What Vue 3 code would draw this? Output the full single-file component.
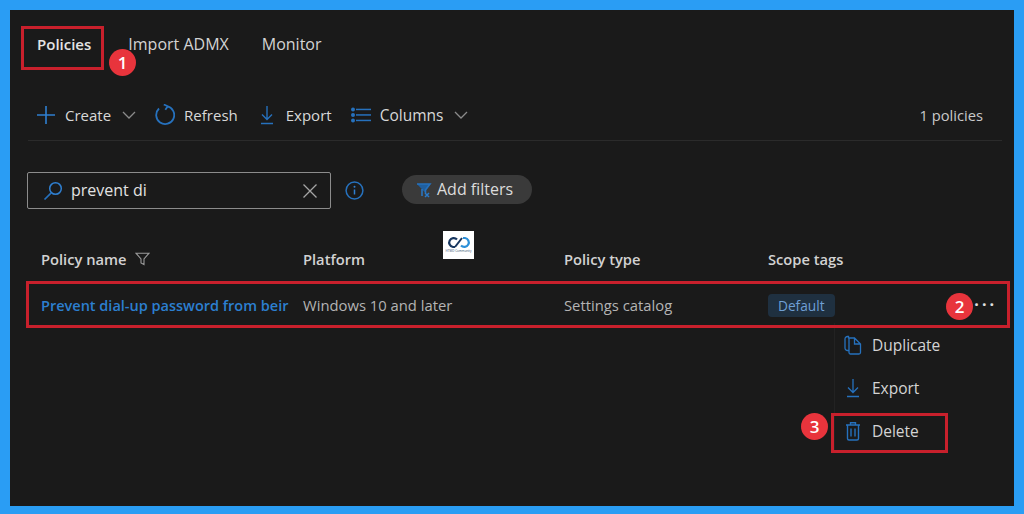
<script setup>
const tabs = [
  { label: 'Policies', active: true },
  { label: 'Import ADMX', active: false },
  { label: 'Monitor', active: false },
]
const columns = ['Platform', 'Policy type', 'Scope tags']
</script>

<template>
  <div class="frame">
    <main class="panel">
      <nav class="tabs">
        <span v-for="t in tabs" :key="t.label" class="tab" :class="{ active: t.active }">{{ t.label }}</span>
      </nav>

      <div class="toolbar">
        <div class="tool create">
          <svg class="ico" width="20" height="20" viewBox="0 0 20 20"><path d="M10 1v18M1 10h18" stroke="#2f7fd0" stroke-width="1.6" fill="none"/></svg>
          <span class="tool-label">Create</span>
          <svg class="chev" width="14" height="8" viewBox="0 0 14 8"><path d="M1 1l6 6 6-6" stroke="#8a8a8a" stroke-width="1.3" fill="none"/></svg>
        </div>
        <div class="tool refresh">
          <svg class="ico" width="20" height="22" viewBox="0 0 20 22"><path d="M4 4.500A9 9 0 1 0 12 2.200M8.800 0.500L12.800 2.300L10.300 5.800" stroke="#2671bd" stroke-width="1.8" fill="none"/></svg>
          <span class="tool-label">Refresh</span>
        </div>
        <div class="tool export">
          <svg class="ico" width="14" height="20" viewBox="0 0 14 20"><path d="M7 1v13M2 9.500l5 5 5-5M1 18.500h12" stroke="#2671bd" stroke-width="1.400" fill="none"/></svg>
          <span class="tool-label">Export</span>
        </div>
        <div class="tool cols">
          <svg class="ico" width="20" height="16" viewBox="0 0 20 16"><g fill="#2671bd"><circle cx="2" cy="2.500" r="2"/><circle cx="2" cy="8" r="2"/><circle cx="2" cy="13.500" r="2"/><rect x="5" y="1.700" width="15" height="1.500"/><rect x="5" y="7.200" width="15" height="1.500"/><rect x="5" y="12.700" width="15" height="1.500"/></g></svg>
          <span class="tool-label">Columns</span>
          <svg class="chev" width="14" height="8" viewBox="0 0 14 8"><path d="M1 1l6 6 6-6" stroke="#8a8a8a" stroke-width="1.300" fill="none"/></svg>
        </div>
        <span class="count">1 policies</span>
      </div>

      <div class="filters">
        <div class="search">
          <svg width="20" height="20" viewBox="0 0 20 20"><circle cx="12.500" cy="7.500" r="5.800" stroke="#2f7fd0" stroke-width="1.500" fill="none"/><path d="M8.200 11.800L1.500 18.500" stroke="#2671bd" stroke-width="1.700"/></svg>
          <span class="query">prevent di</span>
          <svg class="clear" width="16" height="16" viewBox="0 0 16 16"><path d="M1.500 1.500l13 13M14.500 1.500l-13 13" stroke="#a5a5a5" stroke-width="1.300"/></svg>
        </div>
        <svg class="info" width="19" height="19" viewBox="0 0 19 19"><circle cx="9.500" cy="9.500" r="8.400" stroke="#2671bd" stroke-width="1.500" fill="none"/><path d="M9.500 8.500v5" stroke="#2f7fd0" stroke-width="1.500"/><circle cx="9.500" cy="5.800" r="1" fill="#2f7fd0"/></svg>
        <div class="pill">
          <svg width="16" height="16" viewBox="0 0 16 16"><path d="M1 2h13L9.500 8v3" stroke="#2671bd" stroke-width="1.600" fill="#1f5f9f"/><path d="M6 7v7M9 11l4 4M13 11l-4 4" stroke="#2a7ac8" stroke-width="1.500"/></svg>
          <span class="pill-label">Add filters</span>
        </div>
      </div>

      <div class="grid head">
        <div class="hcell">Policy name
          <svg width="15" height="14" viewBox="0 0 15 14"><path d="M1 1.200h13L9 7v5.500L6 11V7z" stroke="#9a9a9a" stroke-width="1.100" fill="none"/></svg>
        </div>
        <div v-for="c in columns" :key="c" class="hcell">{{ c }}</div>
      </div>

      <div class="grid row">
        <div class="link">Prevent dial-up password from beir</div>
        <div class="cell">Windows 10 and later</div>
        <div class="cell">Settings catalog</div>
        <div class="tagcell">
          <span class="tag">Default</span>
          <span class="dots">···</span>
        </div>
      </div>

      <ul class="menu">
        <li>
          <svg width="18" height="20" viewBox="0 0 18 20"><path d="M4.500 3.500V1.500h-1a2.500 2.500 0 0 0-2.500 2.500v9a2.500 2.500 0 0 0 2.500 2.500H5" stroke="#2671bd" stroke-width="1.300" fill="none"/><path d="M5 3h5.500L16.500 9v8.500a1.500 1.500 0 0 1-1.500 1.500H6.500a1.500 1.500 0 0 1-1.500-1.500zM10.500 3v6h6" stroke="#2671bd" stroke-width="1.300" fill="none"/></svg>
          <span>Duplicate</span>
        </li>
        <li>
          <svg width="14" height="20" viewBox="0 0 14 20"><path d="M7 1v13M2 9.500l5 5 5-5M1 18.500h12" stroke="#2671bd" stroke-width="1.300" fill="none"/></svg>
          <span>Export</span>
        </li>
        <li>
          <svg width="16" height="20" viewBox="0 0 16 20"><path d="M1 4h14M5.500 4V1.800h5V4M2.500 4v13.500a1.500 1.500 0 0 0 1.500 1.500h8a1.500 1.500 0 0 0 1.500-1.500V4M6 7.500v8M10 7.500v8" stroke="#2671bd" stroke-width="1.400" fill="none"/></svg>
          <span>Delete</span>
        </li>
      </ul>

      <div class="logo">
        <svg width="24" height="13" viewBox="0 0 24 13"><path d="M10 3.500A4.500 4.500 0 1 0 6 11h2" stroke="#17365f" stroke-width="2.200" fill="none"/><path d="M14 9.500A4.500 4.500 0 1 0 18 2h-2" stroke="#2a8fd8" stroke-width="2.200" fill="none"/><path d="M8 11l7-9" stroke="#17365f" stroke-width="2"/></svg>
        <span class="logo-text">HTMD Community</span>
      </div>

      <i class="mark mark-tab"></i>
      <i class="mark mark-row"></i>
      <i class="mark mark-del"></i>
      <b class="badge b1">1</b>
      <b class="badge b2">2</b>
      <b class="badge b3">3</b>
    </main>
  </div>
</template>

<style>
html, body { margin: 0; background: #2a9df4; }
</style>

<style scoped>
.frame {
  width: 1024px;
  height: 514px;
  box-sizing: border-box;
  padding: 10px 10px 8px;
  background: #2a9df4;
  font-family: "Open Sans", "Noto Sans", sans-serif;
}
.panel {
  position: relative;
  height: 100%;
  box-sizing: border-box;
  padding: 0 12px 0 18px;
  background: #1a1a1a;
  color: #d6d6d6;
  font-size: 15px;
  overflow: hidden;
}
.tabs {
  display: flex;
  gap: 33px;
  padding: 23px 0 0 9px;
  height: 45px;
  box-sizing: border-box;
  line-height: 22px;
  font-size: 16px;
}
.tab { color: #d4d4d4; }
.tab.active { font-size: 15px; font-weight: 600; color: #e4e4e4; margin-right: 4px; }
.toolbar {
  display: flex;
  align-items: center;
  height: 86px;
  padding: 34px 19px 0 8px;
  border-bottom: 1px solid #2b2b2b;
  box-sizing: border-box;
}
.tool { display: flex; align-items: center; }
.tool-label { color: #d8d8d8; }
.create .tool-label { margin-left: 9px; }
.chev { margin-left: 11px; }
.refresh { margin-left: 19px; }
.refresh .tool-label { margin-left: 9px; }
.export { margin-left: 22px; }
.export .tool-label { margin-left: 12px; }
.cols { margin-left: 19px; }
.cols .tool-label { margin-left: 9px; font-size: 15.5px; }
.count { margin-left: auto; color: #c9c9c9; font-size: 14.7px; }
.filters {
  display: flex;
  align-items: flex-start;
  margin-top: 31px;
  margin-left: -1px;
  font-size: 16px;
}
.search {
  display: flex;
  align-items: center;
  width: 304px;
  height: 37px;
  box-sizing: border-box;
  padding: 0 12px 0 15px;
  border: 1px solid #8c8c8c;
  border-radius: 2px;
}
.query { margin-left: 8px; padding-bottom: 2px; color: #e2e2e2; }
.clear { margin-left: auto; }
.info { margin: 9px 0 0 14px; }
.pill {
  display: flex;
  align-items: center;
  gap: 5px;
  height: 29px;
  margin: 3px 0 0 38px;
  padding: 0 19px 0 14px;
  border-radius: 15px;
  background: #3a3a3a;
  color: #dcdcdc;
}
.pill-label { padding-bottom: 2px; }
.grid {
  display: grid;
  grid-template-columns: 262px 261px 204px 1fr;
  padding-left: 13px;
}
.head {
  align-items: center;
  height: 40px;
  margin-top: 30px;
  font-size: 14.7px;
  font-weight: 600;
  color: #d2d2d2;
}
.hcell { display: flex; align-items: center; gap: 9px; }
.row {
  align-items: center;
  height: 45px;
  margin-top: 4px;
  font-size: 14.8px;
}
.link {
  font-size: 14.5px;
  white-space: nowrap;
  font-weight: 600;
  color: #2c7fd0;
}
.cell { padding-bottom: 2px; color: #b4b4b4; }
.tagcell { display: flex; align-items: center; }
.tag {
  padding: 2px 10px;
  border-radius: 4px;
  background: #1f3040;
  color: #6f9fd4;
  font-size: 13.7px;
  line-height: 19px;
}
.dots {
  margin: 0 5px 4px auto;
  letter-spacing: 3px;
  font-size: 16px;
  line-height: 16px;
  font-weight: 700;
  color: #e0e0e0;
}
.menu {
  position: absolute;
  left: 824px;
  top: 313px;
  width: 130px;
  margin: 0;
  padding: 0;
  list-style: none;
  border-left: 1px solid #222;
  color: #d4d4d4;
  font-size: 15.5px;
}
.menu li {
  display: flex;
  align-items: center;
  height: 43px;
}
.menu svg { width: 18px; margin-left: 9px; margin-right: 10px; }
.logo {
  position: absolute;
  left: 433px;
  top: 221px;
  width: 31px;
  height: 28px;
  box-sizing: border-box;
  padding-top: 5px;
  background: #fff;
  display: flex;
  flex-direction: column;
  align-items: center;
}
.logo-text {
  font-size: 3px;
  line-height: 4px;
  white-space: nowrap;
  color: #33506f;
}
.mark {
  position: absolute;
  border: 3px solid #c8202c;
  box-sizing: border-box;
}
.mark-tab { left: 11px; top: 16px; width: 83px; height: 44px; }
.mark-row { left: 16px; top: 271px; width: 984px; height: 47px; }
.mark-del { left: 821px; top: 403px; width: 117px; height: 40px; }
.badge {
  position: absolute;
  width: 27px;
  height: 27px;
  border-radius: 50%;
  background: #e8343c;
  color: #fff;
  font-size: 17px;
  font-weight: 600;
  line-height: 27px;
  text-align: center;
}
.b1 { left: 99px; top: 39px; }
.b2 { left: 936px; top: 283px; }
.b3 { left: 791px; top: 403px; }
</style>
